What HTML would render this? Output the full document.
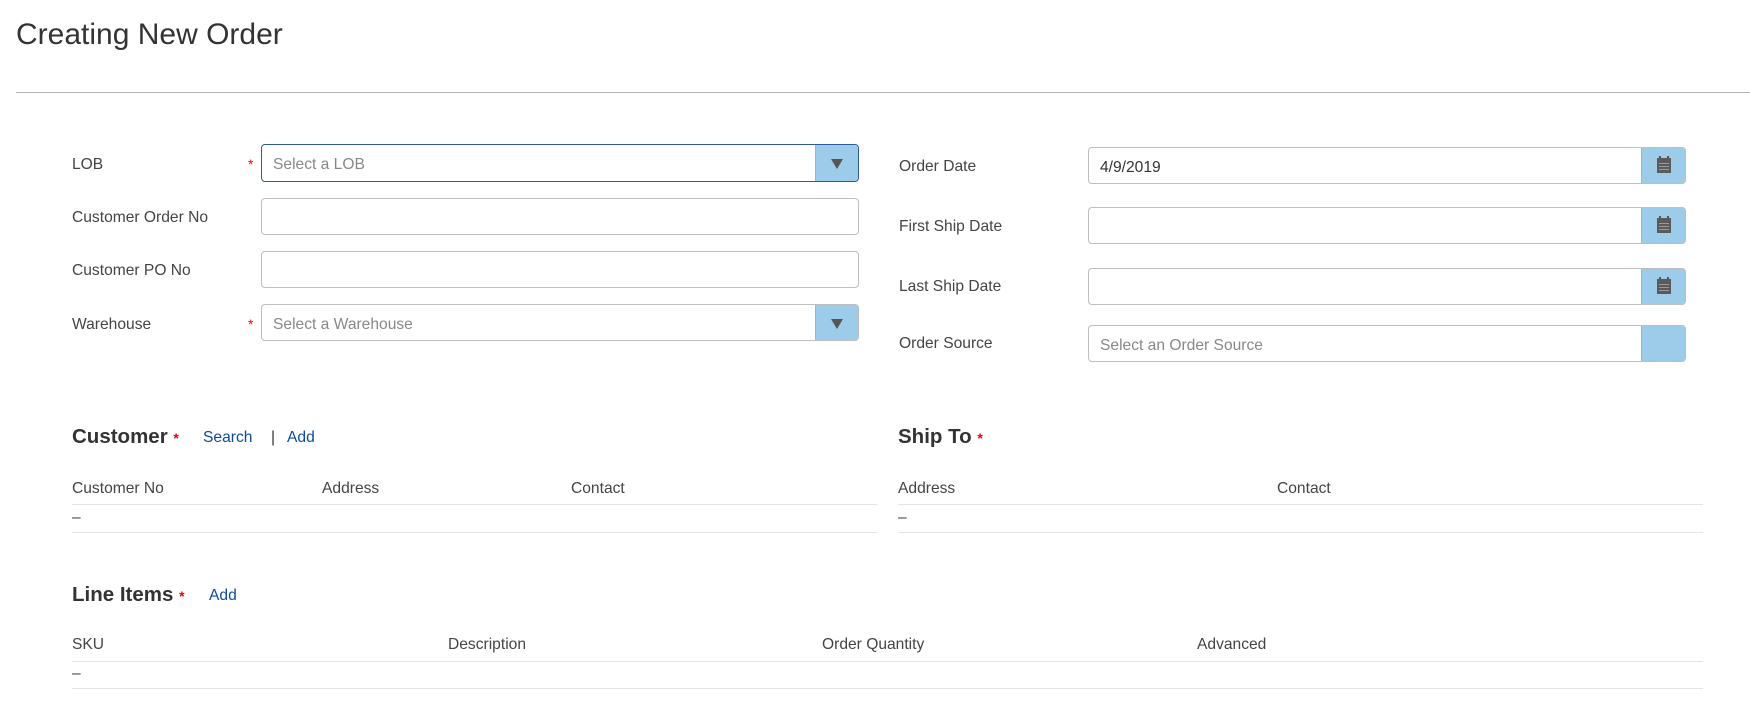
<!DOCTYPE html>
<html><head><meta charset="utf-8"><style>
*{box-sizing:border-box;margin:0;padding:0}
body{width:1750px;height:720px;background:#fff;font-family:"Liberation Sans",Arial,sans-serif;color:#444;position:relative;overflow:hidden}
.a{position:absolute}
.t{font-size:30px;color:#333;left:16px;top:18px}
.hr{left:16px;right:0;top:92px;height:1px;background:#b5b5b5}
.lb{font-size:15.6px;color:#444;line-height:18px}
.in{border:1px solid #bdbdbd;border-radius:4px;height:37px;background:#fff;overflow:hidden}
.ph{position:absolute;left:11px;top:0;line-height:39px;font-size:15.6px;color:#888}
.btn{position:absolute;right:0;top:0;bottom:0;width:43px;background:#9dcbea;border-left:1px solid #b0b0b0}
.arr{position:absolute;left:15px;top:14px;width:0;height:0;border-left:6px solid transparent;border-right:6px solid transparent;border-top:10px solid #555}
.st{color:#e00;font-size:14px}
.h{font-size:20.5px;font-weight:bold;color:#333}
.lk{color:#0b4a9e;font-size:15.6px}
.th{font-size:15.6px;color:#444}
.ln{height:1px;background:#e4e4e4}
</style></head><body>
<div class="a t">Creating New Order</div>
<div class="a hr"></div>

<div class="a lb" style="left:72px;top:156px">LOB</div>
<div class="a st" style="left:248px;top:156px">*</div>
<div class="a in" style="left:261px;top:144px;width:598px;height:38px;border-color:#2c5b9c"><span class="ph">Select a LOB</span><div class="btn"><div class="arr"></div></div></div>
<div class="a lb" style="left:72px;top:209px">Customer Order No</div>
<div class="a in" style="left:261px;top:198px;width:598px"></div>
<div class="a lb" style="left:72px;top:262px">Customer PO No</div>
<div class="a in" style="left:261px;top:251px;width:598px"></div>
<div class="a lb" style="left:72px;top:316px">Warehouse</div>
<div class="a st" style="left:248px;top:316px">*</div>
<div class="a in" style="left:261px;top:304px;width:598px"><span class="ph">Select a Warehouse</span><div class="btn"><div class="arr"></div></div></div>

<div class="a lb" style="left:899px;top:158px">Order Date</div>
<div class="a in" style="left:1088px;top:147px;width:598px"><span class="ph" style="color:#333">4/9/2019</span><div class="btn" style="width:44px"><svg style="position:absolute;left:14px;top:8px" width="16" height="18" viewBox="0 0 16 18"><rect x="3" y="0" width="2" height="4" fill="#555"/><rect x="11" y="0" width="2" height="4" fill="#555"/><rect x="1" y="2" width="14" height="15" fill="#5a5a5a"/><g fill="#9a9a9a"><rect x="3" y="7" width="10" height="1"/><rect x="3" y="10" width="10" height="1"/><rect x="3" y="13" width="10" height="1"/></g></svg></div></div>
<div class="a lb" style="left:899px;top:218px">First Ship Date</div>
<div class="a in" style="left:1088px;top:207px;width:598px"><div class="btn" style="width:44px"><svg style="position:absolute;left:14px;top:8px" width="16" height="18" viewBox="0 0 16 18"><rect x="3" y="0" width="2" height="4" fill="#555"/><rect x="11" y="0" width="2" height="4" fill="#555"/><rect x="1" y="2" width="14" height="15" fill="#5a5a5a"/><g fill="#9a9a9a"><rect x="3" y="7" width="10" height="1"/><rect x="3" y="10" width="10" height="1"/><rect x="3" y="13" width="10" height="1"/></g></svg></div></div>
<div class="a lb" style="left:899px;top:278px">Last Ship Date</div>
<div class="a in" style="left:1088px;top:268px;width:598px"><div class="btn" style="width:44px"><svg style="position:absolute;left:14px;top:8px" width="16" height="18" viewBox="0 0 16 18"><rect x="3" y="0" width="2" height="4" fill="#555"/><rect x="11" y="0" width="2" height="4" fill="#555"/><rect x="1" y="2" width="14" height="15" fill="#5a5a5a"/><g fill="#9a9a9a"><rect x="3" y="7" width="10" height="1"/><rect x="3" y="10" width="10" height="1"/><rect x="3" y="13" width="10" height="1"/></g></svg></div></div>
<div class="a lb" style="left:899px;top:335px">Order Source</div>
<div class="a in" style="left:1088px;top:325px;width:598px"><span class="ph">Select an Order Source</span><div class="btn" style="width:44px"></div></div>

<div class="a h" style="left:72px;top:425px">Customer <span class="st">*</span></div>
<div class="a lk" style="left:203px;top:429px">Search</div>
<div class="a lk" style="left:271px;top:429px;color:#333">|</div>
<div class="a lk" style="left:287px;top:429px">Add</div>
<div class="a th" style="left:72px;top:480px">Customer No</div>
<div class="a th" style="left:322px;top:480px">Address</div>
<div class="a th" style="left:571px;top:480px">Contact</div>
<div class="a ln" style="left:72px;width:805px;top:504px"></div>
<div class="a th" style="left:72px;top:509px">–</div>
<div class="a ln" style="left:72px;width:805px;top:532px"></div>

<div class="a h" style="left:898px;top:425px">Ship To <span class="st">*</span></div>
<div class="a th" style="left:898px;top:480px">Address</div>
<div class="a th" style="left:1277px;top:480px">Contact</div>
<div class="a ln" style="left:898px;width:805px;top:504px"></div>
<div class="a th" style="left:898px;top:509px">–</div>
<div class="a ln" style="left:898px;width:805px;top:532px"></div>

<div class="a h" style="left:72px;top:583px">Line Items <span class="st">*</span></div>
<div class="a lk" style="left:209px;top:587px">Add</div>
<div class="a th" style="left:72px;top:636px">SKU</div>
<div class="a th" style="left:448px;top:636px">Description</div>
<div class="a th" style="left:822px;top:636px">Order Quantity</div>
<div class="a th" style="left:1197px;top:636px">Advanced</div>
<div class="a ln" style="left:72px;width:1631px;top:661px"></div>
<div class="a th" style="left:72px;top:665px">–</div>
<div class="a ln" style="left:72px;width:1631px;top:688px"></div>
</body></html>
